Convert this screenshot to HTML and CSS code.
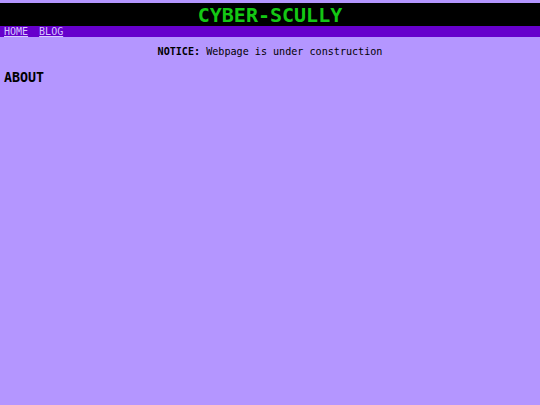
FILE: index.html
```html
<!DOCTYPE html>
<html>
<head>
<meta charset="utf-8">
<link rel="stylesheet" href="styles.css">
</head>
<body>
<header class="top">
  <h1 class="title">CYBER-SCULLY</h1>
  <nav class="nav"><a href="#">HOME</a><a href="#">BLOG</a></nav>
</header>
<p class="notice"><b>NOTICE:</b> Webpage is under construction</p>
<h2 class="about">ABOUT</h2>
</body>
</html>
```
FILE: styles.css
```css
html, body {
  margin: 0;
  padding: 0;
  background: #b496ff;
  font-family: "DejaVu Sans Mono", monospace;
}
body {
  padding-top: 3px;
}
.top {
  margin: 0;
}
.title {
  margin: 0;
  background: #000;
  color: #14c814;
  font-size: 20px;
  font-weight: bold;
  text-align: center;
  height: 23px;
  line-height: 24px;
}
.nav {
  background: #6600cc;
  height: 11px;
  line-height: 11px;
  font-size: 10px;
  padding-left: 4px;
}
.nav a {
  color: #d8c8ff;
  margin-right: 11px;
}
.notice {
  margin: 9px 0 0;
  text-align: center;
  font-size: 10.1px;
  line-height: 12px;
  color: #000;
}
.about {
  margin: 12px 0 0 4px;
  font-size: 13.3px;
  font-weight: bold;
  line-height: 16px;
  color: #000;
}
```
